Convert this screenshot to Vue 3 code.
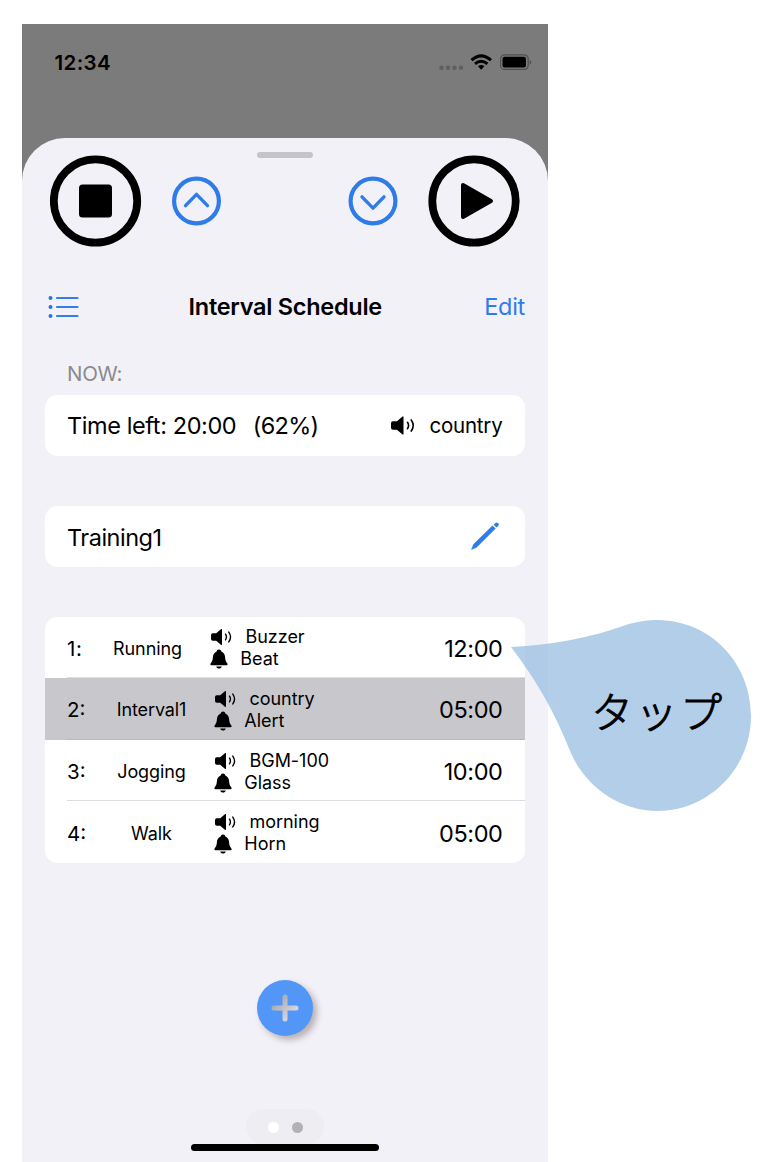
<script setup>
const intervals = [
  { no: '1:', name: 'Running', sound: 'Buzzer', alarm: 'Beat', time: '12:00', narrow: true },
  { no: '2:', name: 'Interval1', sound: 'country', alarm: 'Alert', time: '05:00', active: true },
  { no: '3:', name: 'Jogging', sound: 'BGM-100', alarm: 'Glass', time: '10:00' },
  { no: '4:', name: 'Walk', sound: 'morning', alarm: 'Horn', time: '05:00' }
]
</script>

<template>
  <main class="page">
    <section class="phone">
      <header class="status">
        <span class="clock">12:34</span>
        <svg class="status-icons" width="94" height="18" viewBox="0 0 94 18">
          <g fill="#5f5f5f"><circle cx="2.500" cy="13.700" r="2.200" /><circle cx="9" cy="13.700" r="2.200" /><circle cx="15.500" cy="13.700" r="2.200" /><circle cx="22" cy="13.700" r="2.200" /></g>
          <g fill="none" stroke="#000" stroke-width="3">
            <path d="M32.500 6.200Q42.200-2.400 52 6.200" /><path d="M36 9.900Q42.200 4.700 48.400 9.900" />
          </g>
          <path d="M39 12.300Q42.200 9.600 45.400 12.300L42.200 15.700Z" />
          <rect x="61.600" y=".8" width="27.600" height="14.600" rx="4" fill="none" stroke="#505050" stroke-width="1.200" />
          <rect x="63.500" y="2.700" width="23.400" height="10.800" rx="2" />
          <path d="M90.700 6v4.600c2-.7 2-3.900 0-4.600" fill="#505050" />
        </svg>
      </header>

      <div class="sheet">
        <div class="grabber"></div>
        <div class="controls">
          <svg class="big" viewBox="0 0 92 92">
            <circle cx="45.500" cy="46" r="41.700" fill="none" stroke="#000" stroke-width="7.800" />
            <rect x="29" y="29.500" width="33" height="33" rx="3.500" />
          </svg>
          <svg class="small up" viewBox="0 0 50 50">
            <circle cx="24.500" cy="25" r="22.400" /><path d="M13.500 29.600 24.500 18.400 35.500 29.600" />
          </svg>
          <svg class="small down" viewBox="0 0 50 50">
            <circle cx="25" cy="25" r="22.400" /><path d="M14 20.900 25 32.100 36 20.900" />
          </svg>
          <svg class="big" viewBox="0 0 92 92">
            <circle cx="46" cy="46" r="41.700" fill="none" stroke="#000" stroke-width="7.800" />
            <path d="M35 30 63 46 35 62Z" stroke="#000" stroke-width="4" stroke-linejoin="round" />
          </svg>
        </div>

        <nav class="nav">
          <svg width="32" height="24" viewBox="0 0 32 24">
            <g fill="#2b73d6"><circle cx="2.500" cy="3" r="2" /><circle cx="2.500" cy="12" r="2" /><circle cx="2.500" cy="21" r="2" /></g>
            <path d="M9 3H29.500M9 12H29.500M9 21H29.500" stroke="#2f80ed" stroke-width="2.200" stroke-linecap="round" />
          </svg>
          <h1>Interval Schedule</h1>
          <span class="edit">Edit</span>
        </nav>

        <div class="label">NOW:</div>
        <div class="card now">
          <span class="left">Time left: 20:00</span>
          <span class="percent">(62%)</span>
          <svg class="speaker large" viewBox="0 0 22 16"><path d="M1.800 4.200h3.400L9.900.2q1.100-.7 1.100.6v14.400q0 1.300-1.100.6L5.200 11.800H1.800Q0 11.800 0 10V6Q0 4.200 1.800 4.200Z" /><path class="wave" d="M14.500 5.200q1.900 2.800 0 5.600M17.800 3.100q3.500 4.900 0 9.800" /></svg>
          <span class="track">country</span>
        </div>

        <div class="card training">
          <span>Training1</span>
          <svg width="30" height="30" viewBox="0 0 30 30" fill="#2f7ce8">
            <path d="M1.600 28.500 3.500 23.400 22.500 4.800 25.300 7.600 6.600 26.200Z" stroke="#2f7ce8" stroke-width=".6" stroke-linejoin="round" />
            <path d="M23.600 3.700 25.500 1.900q1.100-1 2.200 0l.7.7q1 1.100 0 2.200L26.500 6.600Z" />
          </svg>
        </div>

        <div class="card list">
          <div v-for="item in intervals" :key="item.no" class="row" :class="{ active: item.active, narrow: item.narrow }">
            <span class="number">{{ item.no }}</span>
            <span class="name">{{ item.name }}</span>
            <div class="sounds">
              <div class="sound">
                <svg class="speaker" viewBox="0 0 22 16"><path d="M1.800 4.200h3.400L9.900.2q1.100-.7 1.100.6v14.400q0 1.300-1.100.6L5.200 11.800H1.800Q0 11.800 0 10V6Q0 4.200 1.800 4.200Z" /><path class="wave" d="M14.500 5.200q1.900 2.800 0 5.600M17.800 3.100q3.500 4.900 0 9.800" /></svg>
                <span>{{ item.sound }}</span>
              </div>
              <div class="sound alarm">
                <svg class="bell" viewBox="0 0 18 20"><path d="M9 .5c1.400 0 2.100.8 2.300 2 2.500.9 3.600 3 3.800 5.800.2 3.100.8 4.500 2.100 5.900.9 1 .3 2-1 2H1.800c-1.300 0-1.900-1-1-2 1.300-1.400 1.900-2.800 2.100-5.900.2-2.800 1.300-4.900 3.800-5.800.2-1.200.9-2 2.300-2ZM6.200 17.500h5.600C11.300 19 10.300 19.500 9 19.500s-2.300-.5-2.800-2Z" /></svg>
                <span>{{ item.alarm }}</span>
              </div>
            </div>
            <span class="time">{{ item.time }}</span>
          </div>
        </div>

        <div class="add">
          <svg width="28" height="28" viewBox="0 0 28 28">
            <defs><linearGradient id="plus" x1="0" y1="0" x2="1" y2="1"><stop offset=".2" stop-color="#aaa9b0" /><stop offset=".75" stop-color="#d8d7dd" /></linearGradient></defs>
            <path d="M11.500 3q0-2.500 2.500-2.500T16.500 3v8.500H25q2.500 0 2.500 2.500T25 16.500h-8.500V25q0 2.500-2.500 2.500T11.500 25v-8.500H3Q.5 16.500.5 14T3 11.500h8.500Z" fill="url(#plus)" />
          </svg>
        </div>
        <div class="pager"><i></i><i></i></div>
        <div class="home"></div>
      </div>
    </section>

    <aside class="callout">
      <svg width="242" height="194" viewBox="0 0 242 194">
        <path d="M1 28C42 26 82 18 113 7C127 2 139 1 148 1C202 2 241 45 241 97C241 150 198 192 148 192C108 192 74 166 60 132C45 94 27 62 1 28Z" fill="rgba(154,189,225,.75)" />
      </svg>
      <span>タップ</span>
    </aside>
  </main>
</template>

<style>
body { margin: 0; background: #fff; }
</style>

<style scoped>
.page { position: relative; width: 770px; height: 1162px; overflow: hidden; box-sizing: border-box; padding: 24px 0 0 22px; background: #fff; color: #000; font-family: Inter, "Liberation Sans", sans-serif; }
.phone { width: 526px; height: 1138px; background: #7b7b7b; }
.status { height: 113.500px; box-sizing: border-box; display: flex; justify-content: space-between; align-items: flex-start; padding: 26px 15px 0 32.500px; }
.clock { font-size: 20.500px; line-height: 26px; font-weight: 600; letter-spacing: .35px; }
.status-icons { margin-top: 4px; }
.sheet { height: 1024.500px; box-sizing: border-box; background: #f2f1f7; border-radius: 43px 43px 0 0; padding: 14px 23px 0 22.500px; display: flex; flex-direction: column; }
.grabber { width: 56px; height: 6px; border-radius: 3px; background: #c5c4ca; align-self: center; flex: none; }
.controls { height: 92px; margin: -3px 5px 0 5.500px; display: flex; align-items: center; flex: none; }
.big { width: 92px; height: 92px; flex: none; }
.small { width: 50px; height: 50px; fill: none; stroke: #2f7ce8; stroke-width: 4.200; stroke-linecap: round; stroke-linejoin: round; flex: none; }
.up { margin-left: 30px; }
.down { margin-left: auto; margin-right: 30px; }
.small path { stroke-width: 3.400; }
.nav { margin-top: 44px; height: 32px; display: grid; grid-template-columns: 100px 1fr 100px; align-items: center; flex: none; }
.nav > svg { margin-left: 3px; }
h1 { margin: 0; text-align: center; font-size: 23.500px; font-weight: 600; line-height: 32px; letter-spacing: -.28px; white-space: nowrap; padding-left: 1px; }
.edit { text-align: right; color: #2f7ce8; font-size: 23.500px; line-height: 30px; letter-spacing: -.3px; margin-top: 1px; }
.label { height: 26px; margin: 38.500px 0 0 22.500px; color: #8a8a8e; font-size: 20.500px; line-height: 26px; letter-spacing: -.3px; flex: none; }
.card { background: #fff; border-radius: 12.500px; box-sizing: border-box; flex: none; font-size: 23.500px; letter-spacing: -.4px; }
.now, .training { height: 61.500px; padding: 0 22.500px; display: flex; align-items: center; white-space: nowrap; }
.now { margin-top: 7.500px; }
.percent { margin-left: 16.500px; letter-spacing: -.7px; }
.speaker { width: 22px; height: 16px; flex: none; }
.wave { fill: none; stroke: #000; stroke-width: 1.400; stroke-linecap: round; }
.speaker.large { width: 25px; height: 19px; margin-left: auto; }
.track { margin-left: 13.500px; font-size: 20.500px; letter-spacing: -.2px; }
.training { margin-top: 49.500px; justify-content: space-between; }
.training > span { padding-top: 2px; letter-spacing: -.5px; }
.training svg { margin-right: 3px; }
.list { margin-top: 49.500px; height: 246.500px; overflow: hidden; display: grid; grid-template-rows: repeat(4, 1fr); }
.row { display: flex; align-items: center; padding: 2px 22.500px 0; background: linear-gradient(#dedde1, #dedde1) 22.500px 100% / 100% 1px no-repeat; }
.row:last-child { background: none; }
.row.active { background: linear-gradient(#b9b8bd, #b9b8bd) 22.500px 100% / 100% 1px no-repeat #c8c7cc; }
.number { width: 42.500px; font-size: 20.500px; letter-spacing: 0; }
.name { width: 84px; text-align: center; font-size: 18px; letter-spacing: -.1px; }
.narrow .number { width: 38.500px; letter-spacing: .6px; }
.sounds { margin-left: 21.300px; font-size: 18px; letter-spacing: -.03px; }
.sound { height: 22px; line-height: 22px; display: flex; align-items: center; gap: 12.700px; }
.alarm { gap: 12.500px; }
.bell { width: 18px; height: 20px; margin-left: -1px; flex: none; }
.time { margin-left: auto; letter-spacing: -.4px; }
.add { width: 56px; height: 56px; border-radius: 50%; background: #5297f7; display: flex; align-items: center; justify-content: center; align-self: center; margin-top: 117px; box-shadow: 4px 4px 6px rgba(90,70,70,.38); flex: none; }
.pager { width: 78px; height: 35px; border-radius: 17px; background: #eeedf2; align-self: center; margin-top: 73px; display: flex; justify-content: center; align-items: center; gap: 13.500px; flex: none; box-sizing: border-box; padding: 1px 0 0 1px; }
.pager i { width: 11px; height: 11px; border-radius: 50%; background: #fff; }
.pager i + i { background: #b2b1b5; }
.home { width: 188px; height: 7px; border-radius: 4px; background: #000; align-self: center; flex: none; }
.callout { position: absolute; left: 510px; top: 619px; width: 242px; height: 194px; }
.callout svg { display: block; }
.callout span { position: absolute; left: 81px; top: 59px; font: 300 42px/64px "Noto Sans CJK JP", sans-serif; letter-spacing: 2.500px; white-space: nowrap; -webkit-text-stroke: 1px #000; }
</style>
